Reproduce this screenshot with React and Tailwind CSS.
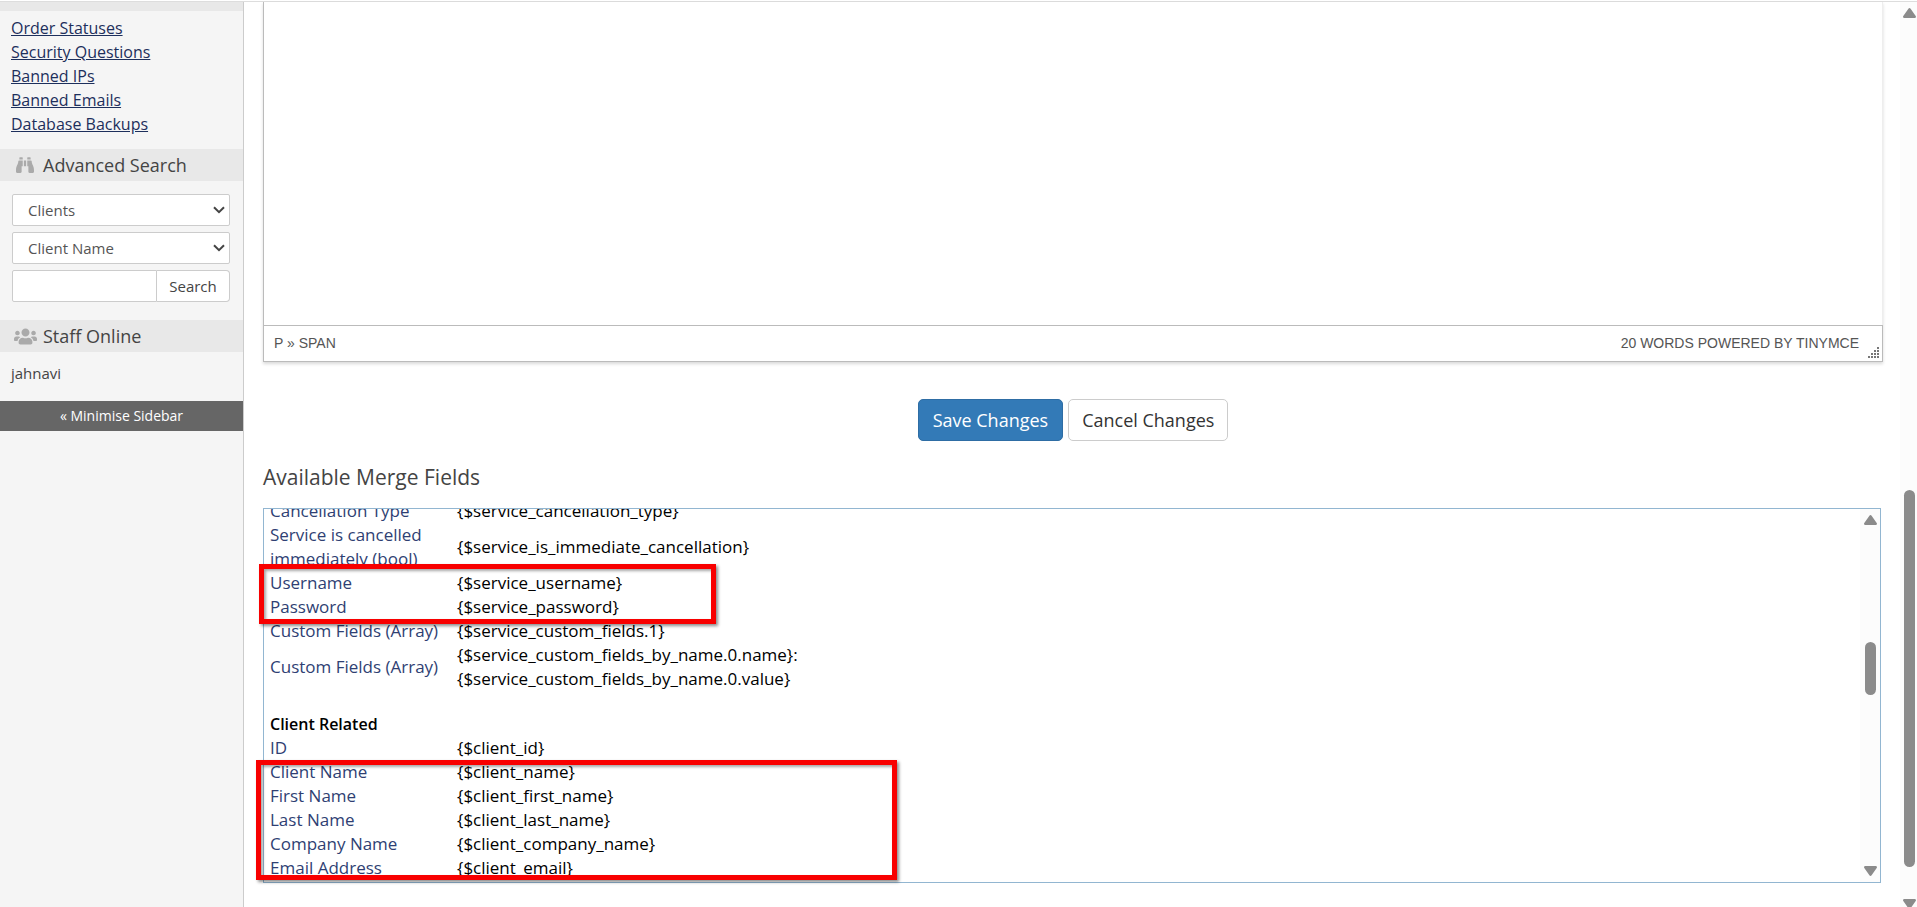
import React from "react";
import { FaBinoculars, FaUsers } from "react-icons/fa";

const links = ["Order Statuses", "Security Questions", "Banned IPs", "Banned Emails", "Database Backups"];

const serviceFields = [
  ["Cancellation Type", "{$service_cancellation_type}"],
  ["Service is cancelled immediately (bool)", "{$service_is_immediate_cancellation}"],
  ["Username", "{$service_username}"],
  ["Password", "{$service_password}"],
  ["Custom Fields (Array)", "{$service_custom_fields.1}"],
  ["Custom Fields (Array)", "{$service_custom_fields_by_name.0.name}: {$service_custom_fields_by_name.0.value}"],
];

const clientFields = [
  ["ID", "{$client_id}"],
  ["Client Name", "{$client_name}"],
  ["First Name", "{$client_first_name}"],
  ["Last Name", "{$client_last_name}"],
  ["Company Name", "{$client_company_name}"],
  ["Email Address", "{$client_email}"],
];

function SidebarHeader({ icon, children }) {
  return (
    <h2 className="flex h-8 items-center bg-[#e8e8e8] pl-[11px] text-lg font-medium text-[#444]">
      <span className="flex w-8 items-center pl-[5px] text-[#aaa]">{icon}</span>
      {children}
    </h2>
  );
}

function SelectBox({ label, value }) {
  return (
    <div className="relative">
      <select
        aria-label={label}
        defaultValue={value}
        className="h-8 w-full appearance-none rounded-xs border border-[#ccc] bg-white pl-[15px] text-[15px] text-[#555]"
      >
        <option>{value}</option>
      </select>
      <svg viewBox="0 0 12 8" className="pointer-events-none absolute top-3 right-[5px] h-2 w-3" fill="none" stroke="#444" strokeWidth="2">
        <path d="M1 1.2 6 6.2 11 1.2" />
      </svg>
    </div>
  );
}

function Arrow({ down }) {
  return (
    <svg viewBox="0 0 13 10" className="h-[10px] w-[13px] shrink-0" fill="#8b8b8b">
      <path
        d={
          down
            ? "M1.3 0h10.4c1.1 0 1.6 1.2 1 2L7.6 9.3c-.6.8-1.6.8-2.2 0L.3 2C-.3 1.2.2 0 1.3 0z"
            : "M1.3 10h10.4c1.1 0 1.6-1.2 1-2L7.6.7c-.6-.8-1.6-.8-2.2 0L.3 8c-.6.8-.1 2 1 2z"
        }
      />
    </svg>
  );
}

function FieldRows({ rows }) {
  return rows.map(([name, tag], i) => (
    <tr key={i}>
      <td className="w-[187px] p-0 pr-4 align-middle">
        <a href="#" className="text-[#2f3f73]">{name}</a>
      </td>
      <td className="p-0 align-middle">
        <span className="block max-w-[360px]">{tag}</span>
      </td>
    </tr>
  ));
}

export default function App() {
  return (
    <div className="h-screen overflow-hidden bg-white pt-px font-['Open_Sans',sans-serif]">
      <div className="flex h-full border-t border-[#ddd]">
        <aside className="w-[244px] shrink-0 border-r border-[#ccc] bg-[#f5f5f5]">
          <div className="h-[9px] bg-[#e8e8e8]" />
          <ul className="px-[11px] pt-[5px] text-base leading-6">
            {links.map((l) => (
              <li key={l}>
                <a href="#" className="text-[#1d2f5c] underline">{l}</a>
              </li>
            ))}
          </ul>
          <div className="h-[13px]" />
          <SidebarHeader icon={<FaBinoculars className="size-[18px]" />}>Advanced Search</SidebarHeader>
          <form className="flex flex-col gap-[6px] pt-[13px] pr-[13px] pb-[18px] pl-3" onSubmit={(e) => e.preventDefault()}>
            <SelectBox label="Search type" value="Clients" />
            <SelectBox label="Search field" value="Client Name" />
            <div className="flex h-8">
              <input aria-label="Search term" className="w-0 grow rounded-l-xs border border-[#ccc] bg-white px-2 text-[15px]" />
              <button className="w-[73px] rounded-r-sm border border-l-0 border-[#ccc] bg-white text-[15px] text-[#444]">Search</button>
            </div>
          </form>
          <SidebarHeader icon={<FaUsers className="-ml-0.5 size-[23px]" />}>Staff Online</SidebarHeader>
          <p className="px-[11px] pt-[9px] pb-4 text-[15px] leading-6 text-[#444]">jahnavi</p>
          <button className="flex h-[30px] w-full items-center justify-center bg-[#666] text-sm text-white">« Minimise Sidebar</button>
        </aside>

        <main className="min-w-0 grow pr-4 pl-[18px]">
          <section className="mr-px ml-px rounded-none border-l border-[#bbb] shadow-[0_2px_3px_rgba(0,0,0,0.15)]">
            <div role="textbox" aria-label="Email body" className="h-[323px] border-r border-[#eee]" />
            <footer className="relative flex h-[37px] items-center justify-between border border-l-0 border-[#bbb] pr-[23px] pb-0.5 pl-[10px] font-['Liberation_Sans',sans-serif] text-sm text-[#555]">
              <span>P » SPAN</span>
              <span>20 WORDS POWERED BY TINYMCE</span>
              <svg viewBox="0 0 12 12" className="absolute right-[3px] bottom-[3px] size-3" fill="#777">
                {[0, 1, 2, 3].flatMap((r) =>
                  Array.from({ length: r + 1 }, (_, k) => (
                    <rect key={`${r}-${k}`} x={10 - k * 3} y={1 + r * 3} width="2" height="2" />
                  ))
                )}
              </svg>
            </footer>
          </section>

          <div className="flex justify-center gap-[5px] pt-[37px] text-lg">
            <button className="h-[42px] rounded-[5px] border border-[#2e6da4] bg-[#337ab7] px-[14px] text-white">Save Changes</button>
            <button className="h-[42px] rounded-[5px] border border-[#ccc] bg-white px-[13px] text-[#333]">Cancel Changes</button>
          </div>

          <h2 className="pt-[21px] pl-px text-[21px] leading-[30px] text-[#444]">Available Merge Fields</h2>

          <section className="relative mt-4 mr-[3px] pl-px">
            <div className="flex h-[375px] overflow-hidden border border-[#92b6d1]">
              <div className="flex min-w-0 grow flex-col overflow-hidden pl-1.5">
                <table className="-mt-[10px] w-full table-fixed border-collapse text-[17px] leading-6 text-black">
                  <tbody>
                    <FieldRows rows={serviceFields} />
                    <tr className="h-[21px]"><td colSpan={2} /></tr>
                    <tr><th colSpan={2} className="p-0 text-left text-base font-semibold">Client Related</th></tr>
                    <FieldRows rows={clientFields} />
                  </tbody>
                </table>
              </div>
              <div className="flex w-5 shrink-0 flex-col items-center bg-[#fcfcfc] py-[6px]">
                <Arrow />
                <div className="grow-[117]" />
                <div className="h-[53px] w-[11px] rounded-full bg-[#8b8b8b]" />
                <div className="grow-[172]" />
                <Arrow down />
              </div>
            </div>
            <div className="pointer-events-none absolute top-[56px] -left-[3px] h-[60px] w-[457px] border-5 border-[#f80000] shadow-[2px_2px_3px_rgba(0,0,0,0.45),inset_2px_2px_3px_rgba(0,0,0,0.35)]" />
            <div className="pointer-events-none absolute top-[252px] -left-[6px] h-[120px] w-[641px] border-5 border-[#f80000] shadow-[2px_2px_3px_rgba(0,0,0,0.45),inset_2px_2px_3px_rgba(0,0,0,0.35)]" />
          </section>
        </main>

        <div className="flex w-[17px] shrink-0 flex-col items-center bg-[#fcfcfc] pt-[6px] pl-0.5">
          <Arrow />
          <div className="grow-[472]" />
          <div className="h-[377px] w-[11px] rounded-full bg-[#8b8b8b]" />
          <div className="grow-[32]" />
          <div className="h-2 overflow-hidden"><Arrow down /></div>
        </div>
      </div>
    </div>
  );
}
